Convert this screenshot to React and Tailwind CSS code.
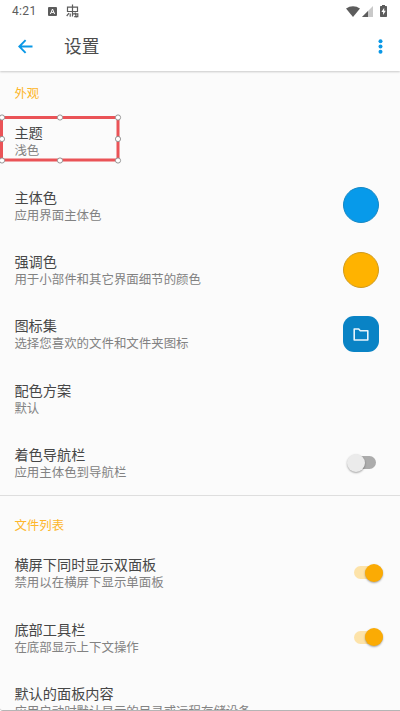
import React, { useState } from 'react';

// Handles of the selection frame, relative to its centre lines
const FRAME_HANDLES = [
  [2, 3],
  [60, 3],
  [118, 3],
  [2, 24.5],
  [118, 24.5],
  [2, 46],
  [60, 46],
  [118, 46],
];

const StatusBar = () => (
  <div className="flex h-[22px] items-center px-3 font-['Roboto',sans-serif] text-[#5c5c5c]">
    <span className="w-9 text-[12px] leading-none tracking-[0.35px]">4:21</span>
    <svg className="h-[9px] w-[9px]" viewBox="0 0 9 9">
      <rect width="9" height="9" rx="1" fill="#5c5c5c" />
      <path d="M2.4 7 4.5 2l2.1 5M3.2 5.4h2.6" fill="none" stroke="#fff" strokeWidth="1" />
    </svg>
    <svg
      className="ml-[9px] h-[14px] w-[14px]"
      viewBox="0 0 14 14"
      fill="none"
      stroke="#5c5c5c"
      strokeWidth="1.2"
    >
      <path d="M1.500 3.200h10v4.300h-10zM6.500.5v12M.7 12l2.300-2.800M4.200 9.500v3.200M6.500 9.800h5.300v2.900H8.200M9 8.500l1.500 5" />
    </svg>
    <div className="flex-1" />
    <svg className="h-[11px] w-[14px]" viewBox="0 0 14 11">
      <path d="M0 2.600C4-.7 10-.7 14 2.600L7 11z" fill="#5c5c5c" />
    </svg>
    <svg className="ml-[2px] h-[11px] w-[11px]" viewBox="0 0 11 11">
      <path d="M0 11 11 0v11z" fill="#c9c9c9" />
      <path d="M0 11 6 5v6z" fill="#5c5c5c" />
    </svg>
    <svg className="mr-[1px] ml-[7px] h-3 w-[7px]" viewBox="0 0 7 12">
      <path d="M2 0h3v1h1.300q.7 0 .7.7v9.600q0 .7-.7.7H.7q-.7 0-.7-.7V1.700Q0 1 .7 1H2z" fill="#5c5c5c" />
      <path d="M4.200 2.800 1.400 7h1.700v3L5.800 5.800H4.200z" fill="#fff" />
    </svg>
  </div>
);

const AppBar = () => (
  <div className="flex h-12 items-center pr-[17px] pl-[18px]">
    <button aria-label="返回">
      <svg className="block h-[15px] w-[15px]" viewBox="0 0 15 15" fill="none" stroke="#0a98e6" strokeWidth="1.9">
        <path d="M14.500 7.500H1.400M7.600 1.200 1.300 7.500l6.300 6.300" />
      </svg>
    </button>
    <h1 className="ml-[31px] flex-1 text-[17.7px] leading-none text-[#4c4c4c]">设置</h1>
    <button aria-label="更多">
      <svg className="block h-[15px] w-[5px]" viewBox="0 0 5 15" fill="#0a98e6">
        <circle cx="2.500" cy="2.200" r="2" />
        <circle cx="2.500" cy="7.500" r="2" />
        <circle cx="2.500" cy="12.800" r="2" />
      </svg>
    </button>
  </div>
);

const SectionTitle = ({ children }) => (
  <h2 className="text-[12.45px] leading-[18px] text-[#fdb62b]">{children}</h2>
);

const Swatch = ({ className }) => (
  <span className={`mr-[7px] block h-9 w-9 rounded-full border ${className}`} />
);

const FolderBadge = () => (
  <span className="mr-[7px] flex h-9 w-9 items-center justify-center rounded-[11px] bg-[#0983c5]">
    <svg className="h-[13px] w-4" viewBox="0 0 16 13" fill="none" stroke="#e8f5fc" strokeWidth="1.600" strokeLinejoin="round">
      <path d="M1.200 1h4.500l1.600 1.700h7.500v9.300H1.200z" />
    </svg>
  </span>
);

const Toggle = ({ label, defaultOn = false }) => {
  const [isOn, setIsOn] = useState(defaultOn);

  return (
    <button
      role="switch"
      aria-checked={isOn}
      aria-label={label}
      onClick={() => setIsOn(!isOn)}
      className={`flex h-[18px] items-center ${isOn ? 'mr-[3px] justify-end' : 'mr-[10px]'}`}
    >
      <span
        className={`flex h-[13px] items-center rounded-full ${
          isOn ? 'w-[29px] justify-end bg-[#fde3a9]' : 'w-7 bg-[#acacac]'
        }`}
      >
        <span
          className={`h-[18px] w-[18px] shrink-0 rounded-full shadow-[0_1px_2px_rgba(0,0,0,0.35)] ${
            isOn ? 'bg-[#fbab04]' : '-ml-px bg-[#ebebeb]'
          }`}
        />
      </span>
    </button>
  );
};

const SettingRow = ({ title, summary, children }) => (
  <div className="flex h-[64.45px] items-center">
    <div className="flex-1 pt-[0.8px] whitespace-nowrap">
      <p className="text-[14.2px] leading-[18px] text-[#474747]">{title}</p>
      <p className="text-[12.45px] leading-[18px] text-[#828282]">{summary}</p>
    </div>
    {children}
  </div>
);

const SelectionFrame = () => (
  <svg className="absolute top-[5.5px] -left-[14.4px] h-[50px] w-[124px]" viewBox="0 0 124 50">
    <rect x="1.500" y="3.500" width="116.500" height="42.500" fill="none" stroke="#ea5357" strokeWidth="3" />
    {FRAME_HANDLES.map(([x, y]) => (
      <circle key={`${x}-${y}`} cx={x} cy={y + 0.5} r="2.600" fill="#fff" stroke="#8c8c8c" strokeWidth="0.900" />
    ))}
  </svg>
);

const App = () => (
  <div className="flex h-[711px] w-[400px] flex-col overflow-hidden rounded-bl-[3px] border-b border-[#b5b5b5] bg-[#fbfbfb] font-['Noto_Sans_CJK_SC',sans-serif]">
    <header className="h-[71px] shrink-0 bg-white shadow-[0_1px_2px_rgba(0,0,0,0.2)]">
      <StatusBar />
      <AppBar />
    </header>

    {/* Appearance */}
    <section className="h-[425px] shrink-0 border-b border-[#dedede] pt-[13px] pr-[14px] pl-[14.4px]">
      <SectionTitle>外观</SectionTitle>
      <div className="relative mt-[6.5px]">
        <SettingRow title="主题" summary="浅色" />
        <SelectionFrame />
        <SettingRow title="主体色" summary="应用界面主体色">
          <Swatch className="border-[#1587c4] bg-[#079aea]" />
        </SettingRow>
        <SettingRow title="强调色" summary="用于小部件和其它界面细节的颜色">
          <Swatch className="border-[#cf9a1e] bg-[#ffb300]" />
        </SettingRow>
        <SettingRow title="图标集" summary="选择您喜欢的文件和文件夹图标">
          <FolderBadge />
        </SettingRow>
        <SettingRow title="配色方案" summary="默认" />
        <SettingRow title="着色导航栏" summary="应用主体色到导航栏">
          <Toggle label="着色导航栏" />
        </SettingRow>
      </div>
    </section>

    {/* File list */}
    <section className="shrink-0 pt-5 pr-[14px] pl-[14.4px]">
      <SectionTitle>文件列表</SectionTitle>
      <div className="mt-[6.500px]">
        <SettingRow title="横屏下同时显示双面板" summary="禁用以在横屏下显示单面板">
          <Toggle label="横屏下同时显示双面板" defaultOn />
        </SettingRow>
        <SettingRow title="底部工具栏" summary="在底部显示上下文操作">
          <Toggle label="底部工具栏" defaultOn />
        </SettingRow>
        <SettingRow title="默认的面板内容" summary="应用启动时默认显示的目录或远程存储设备" />
      </div>
    </section>
  </div>
);

export default App;
